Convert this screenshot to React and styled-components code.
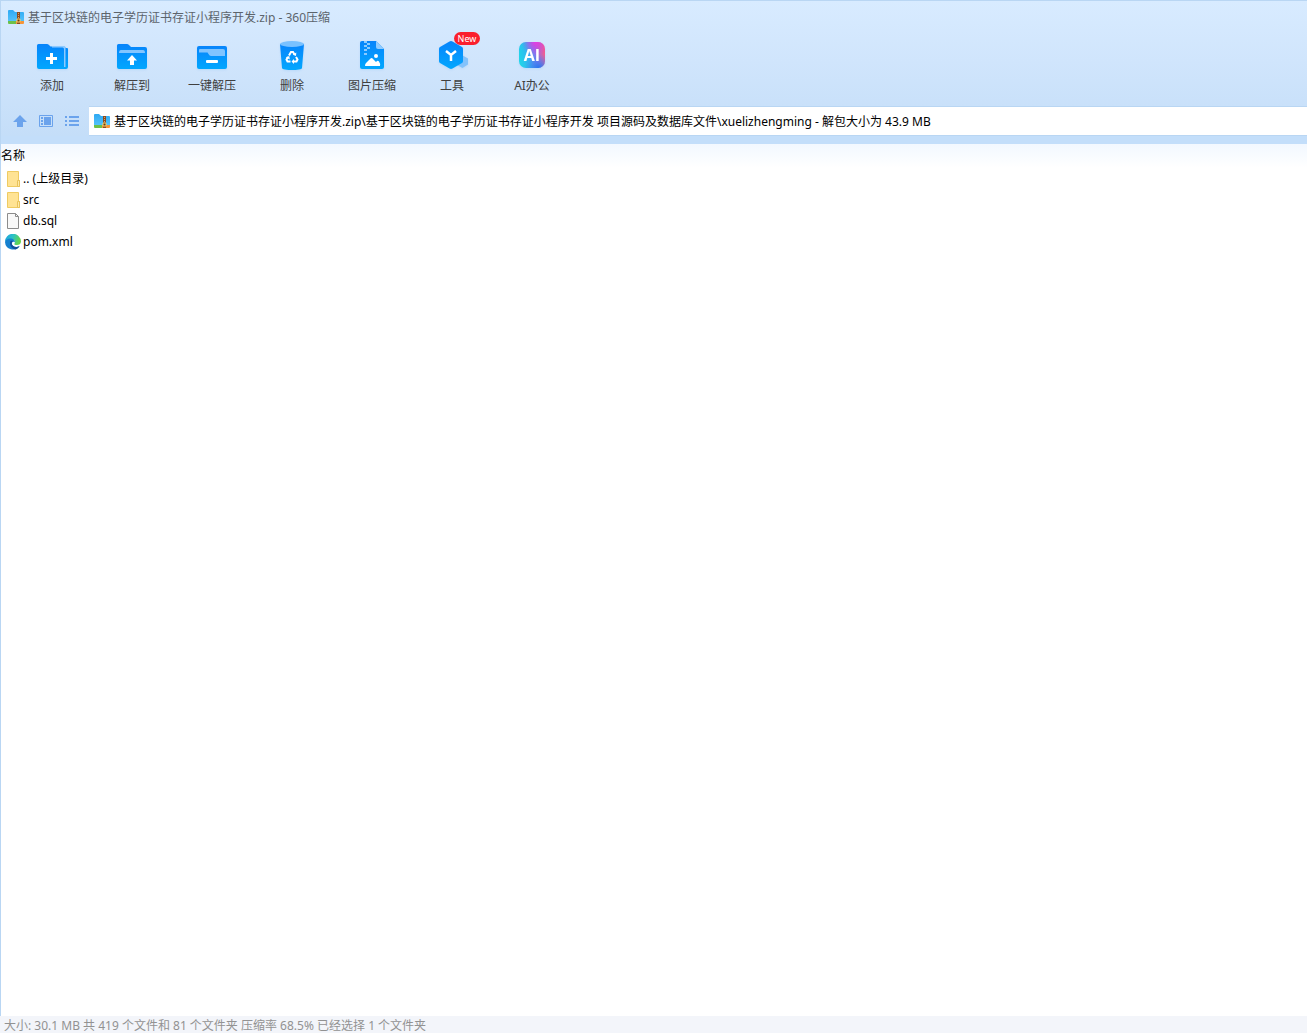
import styled, { createGlobalStyle } from "styled-components";

const title = "基于区块链的电子学历证书存证小程序开发.zip - 360压缩";

const path =
  "基于区块链的电子学历证书存证小程序开发.zip\\基于区块链的电子学历证书存证小程序开发 项目源码及数据库文件\\xuelizhengming - 解包大小为 43.9 MB";

const tools = [
  { label: "添加", Icon: AddIcon },
  { label: "解压到", Icon: ExtractIcon },
  { label: "一键解压", Icon: QuickIcon },
  { label: "删除", Icon: DeleteIcon },
  { label: "图片压缩", Icon: ImageIcon },
  { label: "工具", Icon: ToolsIcon, badge: "New" },
  { label: "AI办公", Icon: AiIcon },
];

const files = [
  { name: ".. (上级目录)", Icon: FolderIcon },
  { name: "src", Icon: FolderIcon },
  { name: "db.sql", Icon: FileIcon },
  { name: "pom.xml", Icon: EdgeIcon },
];

export default function App() {
  return (
    <>
      <GlobalStyle />
      <StyledWindow>
        <StyledHeader>
          <StyledTitleBar>
            <ArchiveIcon />
            <StyledTitle>{title}</StyledTitle>
          </StyledTitleBar>
          <StyledToolbar>
            {tools.map(({ label, Icon, badge }) => (
              <StyledTool type="button" key={label}>
                <Icon />
                {label}
                {badge && <StyledBadge>{badge}</StyledBadge>}
              </StyledTool>
            ))}
          </StyledToolbar>
          <StyledAddressBar>
            <StyledNavButton type="button" aria-label="向上">
              <svg width="14" height="12" viewBox="0 0 14 12">
                <path d="M7 0l7 7h-4v5H4V7H0z" fill="#6ba3ec" />
              </svg>
            </StyledNavButton>
            <StyledNavButton type="button" aria-label="预览">
              <svg width="14" height="12" viewBox="0 0 14 12">
                <path d="M.5.5h13v11H.5z" fill="none" stroke="#6ba3ec" />
                <path
                  d="M5 2h7v8H5zM2 2h2v2H2zM2 5h2v2H2zM2 8h2v2H2z"
                  fill="#6ba3ec"
                />
              </svg>
            </StyledNavButton>
            <StyledNavButton type="button" aria-label="列表">
              <svg width="14" height="10" viewBox="0 0 14 10">
                <path
                  d="M0 0h2v2H0zM0 4h2v2H0zM0 8h2v2H0zM4 0h10v2H4zM4 4h10v2H4zM4 8h10v2H4z"
                  fill="#6ba3ec"
                />
              </svg>
            </StyledNavButton>
            <StyledAddress>
              <ArchiveIcon />
              <StyledInput aria-label="路径" defaultValue={path} />
            </StyledAddress>
          </StyledAddressBar>
        </StyledHeader>
        <StyledMain>
          <StyledTable>
            <thead>
              <tr>
                <StyledHeadCell scope="col">名称</StyledHeadCell>
              </tr>
            </thead>
            <tbody>
              {files.map(({ name, Icon }) => (
                <tr key={name}>
                  <StyledCell>
                    <StyledFile>
                      <Icon />
                      {name}
                    </StyledFile>
                  </StyledCell>
                </tr>
              ))}
            </tbody>
          </StyledTable>
        </StyledMain>
        <StyledStatus>
          大小: 30.1 MB 共 419 个文件和 81 个文件夹 压缩率 68.5% 已经选择 1
          个文件夹
        </StyledStatus>
      </StyledWindow>
    </>
  );
}

function ArchiveIcon() {
  return (
    <svg width="16" height="14" viewBox="0 0 16 14">
      <defs>
        <linearGradient id="archive" x1="0" y1="0" x2="0" y2="1">
          <stop offset="0" stopColor="#2fa9f3" />
          <stop offset="1" stopColor="#55c4fb" />
        </linearGradient>
      </defs>
      <path d="M0 1q0-1 1-1h4l2 2h8q1 0 1 1v9H0z" fill="url(#archive)" />
      <path d="M0 11h9v2q0 1-1 1H1q-1 0-1-1z" fill="#6cc04a" />
      <path d="M8 11h8v2q0 1-1 1H8z" fill="#f5953a" />
      <path d="M9 2h3v12H9z" fill="#8a4b20" />
      <path d="M10 3h1v1h-1zM10 5h1v1h-1zM10 7h1v1h-1z" fill="#d9a066" />
      <path d="M9 9h3v3H9z" fill="#6b3a12" stroke="#f7cf6a" />
    </svg>
  );
}

function BlueFill({ id }) {
  return (
    <defs>
      <linearGradient id={id} x1="0" y1="0" x2="0" y2="1">
        <stop offset="0" stopColor="#0784fb" />
        <stop offset="1" stopColor="#02a7fe" />
      </linearGradient>
    </defs>
  );
}

function AddIcon() {
  return (
    <StyledToolIcon viewBox="0 0 32 32">
      <BlueFill id="add" />
      <path
        d="M2.500 4H11q1 0 2 1l1.500 1.500H28q1.500 0 1.500 1.500H31q1 0 1 1v18q0 2-2 2H3q-2 0-2-2V5.500Q1 4 2.500 4z"
        fill="url(#add)"
      />
      <path d="M16 6h11.500q2 0 2 2v19H28V9q0-1.500-1.500-1.500H16z" fill="#8dcaff" />
      <path d="M14 13h3v4h4v3h-4v4h-3v-4h-4v-3h4z" fill="#fff" />
    </StyledToolIcon>
  );
}

function ExtractIcon() {
  return (
    <StyledToolIcon viewBox="0 0 32 32">
      <BlueFill id="extract" />
      <path
        d="M2.500 4H11q1 0 2 1l2 2h14q2 0 2 2v18q0 2-2 2H3q-2 0-2-2V5.500Q1 4 2.500 4z"
        fill="url(#extract)"
      />
      <path d="M5 10h22q2 0 2 3H3q0-3 2-3z" fill="#83c5ff" />
      <path d="M16 15l5 5.500h-3V25h-4v-4.500h-3z" fill="#fff" />
    </StyledToolIcon>
  );
}

function QuickIcon() {
  return (
    <StyledToolIcon viewBox="0 0 32 32">
      <BlueFill id="quick" />
      <rect x="1" y="6" width="30" height="23" rx="2" fill="url(#quick)" />
      <path
        d="M4 9h23q2 0 2 2v5H15q-1.500 0-2.500-2l-1-1.500H3V10q0-1 1-1z"
        fill="#80c4ff"
      />
      <rect x="10" y="20" width="12" height="3" rx="1" fill="#fff" />
    </StyledToolIcon>
  );
}

function DeleteIcon() {
  return (
    <StyledToolIcon viewBox="0 0 32 32">
      <BlueFill id="delete" />
      <path
        d="M4 4h24l-2 24q0 1-3 1.500-7 1-14 0-3-.5-3-1.500z"
        fill="url(#delete)"
      />
      <ellipse cx="16" cy="4" rx="12" ry="3" fill="#79c1ff" />
      <g fill="none" stroke="#fff" strokeWidth="2">
        <path d="M13 15.500l2-3.500h2l1.500 2.500" />
        <path d="M20 17l1.500 2.500-1 2H17.500" />
        <path d="M14.500 21.500h-3l-1-2L12 17" />
      </g>
      <path
        d="M20.300 12.500l-.3 3.500-3.200-1.300zM18 19v5l-2.500-2.500zM9.800 17.300l3.500-1.300.5 3.500z"
        fill="#fff"
      />
    </StyledToolIcon>
  );
}

function ImageIcon() {
  return (
    <StyledToolIcon viewBox="0 0 32 32">
      <BlueFill id="image" />
      <path
        d="M6 1h14l8 8v18q0 2-2 2H6q-2 0-2-2V3q0-2 2-2z"
        fill="url(#image)"
      />
      <path d="M20 1l8 8h-6q-2 0-2-2z" fill="#91ccff" />
      <path
        d="M8 1h3v2H8zM11 3h3v2h-3zM8 5h3v2H8zM11 7h3v2h-3zM8 9h3v2H8zM8 13h3v2H8z"
        fill="#8bcaff"
      />
      <circle cx="20" cy="16" r="2" fill="#fff" />
      <path
        d="M9 26q0-2 1-3l4.500-4.500q1.500-1 2.500.5l3 3 1-1q1-.7 2 .5 1.500 2 1 4.500z"
        fill="#fff"
      />
    </StyledToolIcon>
  );
}

function ToolsIcon() {
  return (
    <StyledToolIcon viewBox="0 0 32 32">
      <BlueFill id="tools" />
      <path d="M26 15l6 3.500v6L26.500 28 21 25v-6z" fill="#83c2fb" />
      <path
        d="M13.500 1.500q1.500-.8 3 0l9.500 5.500q1 .6 1 2v12q0 1.400-1 2l-9.500 5.500q-1.500.8-3 0L4 23q-1-.6-1-2V9q0-1.400 1-2z"
        fill="url(#tools)"
      />
      <path
        d="M10 11l5 4 5-4M15 15v6"
        fill="none"
        stroke="#fff"
        strokeWidth="2.500"
      />
    </StyledToolIcon>
  );
}

function AiIcon() {
  return (
    <StyledToolIcon viewBox="0 0 32 32">
      <defs>
        <linearGradient id="ai" x1="0" y1="0.600" x2="1" y2="0.400">
          <stop offset="0" stopColor="#20d5e8" />
          <stop offset="0.350" stopColor="#32b5f0" />
          <stop offset="0.650" stopColor="#8775ee" />
          <stop offset="1" stopColor="#fb5a86" />
        </linearGradient>
        <radialGradient id="aiPink" cx="0.650" cy="0" r="0.550">
          <stop offset="0" stopColor="#e93be0" />
          <stop offset="1" stopColor="#b84ae8" stopOpacity="0" />
        </radialGradient>
        <radialGradient id="aiBlue" cx="0.750" cy="1" r="0.550">
          <stop offset="0" stopColor="#2478ef" />
          <stop offset="1" stopColor="#4c80ef" stopOpacity="0" />
        </radialGradient>
      </defs>
      <rect x="3" y="2" width="26" height="26" rx="7" fill="url(#ai)" />
      <rect x="3" y="2" width="26" height="26" rx="7" fill="url(#aiPink)" />
      <rect x="3" y="2" width="26" height="26" rx="7" fill="url(#aiBlue)" />
      <text
        x="16"
        y="21"
        textAnchor="middle"
        fontFamily="Open Sans, sans-serif"
        fontWeight="700"
        fontSize="16"
        fill="#fff"
      >
        AI
      </text>
    </StyledToolIcon>
  );
}

function FolderIcon() {
  return (
    <svg width="16" height="16" viewBox="0 0 16 16">
      <path d="M2.500.5h11v9h1v6h-12z" fill="#ffe394" stroke="#efcb62" />
      <path d="M12.500 9.500h2v6h-2z" fill="#ffe9a8" stroke="#e8c35c" />
    </svg>
  );
}

function FileIcon() {
  return (
    <svg width="16" height="16" viewBox="0 0 16 16">
      <path d="M2.500.5h8l3 3v12h-11z" fill="#f9f9f9" stroke="#8c8c8c" />
      <path d="M10.500.5v3h3" fill="none" stroke="#8c8c8c" />
    </svg>
  );
}

function EdgeIcon() {
  return (
    <svg width="16" height="16" viewBox="0 0 16 16">
      <defs>
        <linearGradient id="edgeTop" x1="0" y1="0" x2="1" y2="0.300">
          <stop offset="0" stopColor="#1b9de2" />
          <stop offset="0.500" stopColor="#2bc1c7" />
          <stop offset="1" stopColor="#62d54e" />
        </linearGradient>
      </defs>
      <path
        d="M0 8a8 8 0 0 1 16-.5c0 2.500-2 3.500-4 3.500-2.500 0-3-1-2.500-1.500C11 8 9.500 5.500 7 5.500 3.500 5.500 1 6 0 8z"
        fill="url(#edgeTop)"
      />
      <path
        d="M0 8c.5-2.500 3.500-4 6.500-3.500 2.500.3 3.800 2.500 3.300 4C9 7 7 7.500 6.800 9.500c0 2.500 2.700 4 5.200 3.500 1-.2 1.800-.6 2.600-1A8 8 0 0 1 0 8z"
        fill="#1580cf"
      />
      <path
        d="M5.500 7C4 10 6 14.500 10.500 15.500c1.700-.6 3.200-1.800 4.100-3.500-3 2-7.600.8-7.800-2.500 0-1 .4-2 1.200-2.400-.8-.6-1.800-.6-2.500-.1z"
        fill="#11509c"
      />
    </svg>
  );
}

const GlobalStyle = createGlobalStyle`
  * {
    box-sizing: border-box;
  }

  body {
    margin: 0;
  }

  body, button, input {
    font-family: "Noto Sans", "Noto Sans CJK SC", sans-serif;
    font-size: 12px;
  }
`;

const StyledWindow = styled.div`
  display: flex;
  flex-direction: column;
  height: 100vh;
  background: #fff;
`;

const StyledHeader = styled.header`
  border-top: 1px solid #b9d6f3;
  border-left: 1px solid #b9d6f3;
  background: linear-gradient(#d8ebff, #d0e5fc 60px, #c3ddf8);
`;

const StyledTitleBar = styled.div`
  display: flex;
  align-items: center;
  gap: 4px;
  height: 31px;
  padding-left: 7px;
`;

const StyledTitle = styled.h1`
  margin: 0;
  font-size: 12px;
  font-weight: 400;
  color: #5c646c;
`;

const StyledToolbar = styled.nav`
  display: flex;
  height: 74px;
  padding: 8px 0 0 11px;
`;

const StyledTool = styled.button`
  position: relative;
  display: flex;
  flex-direction: column;
  align-items: center;
  justify-content: flex-start;
  gap: 4px;
  width: 80px;
  height: 58px;
  padding: 0;
  border: 0;
  background: none;
  line-height: 20px;
  color: #404040;
`;

const StyledToolIcon = styled.svg`
  flex-shrink: 0;
  width: 32px;
  height: 32px;
  filter: drop-shadow(0 1px 1px #8fc3f655);
`;

const StyledBadge = styled.span`
  position: absolute;
  top: -8px;
  left: 42px;
  width: 26px;
  border-radius: 7px;
  background: #fa1f2d;
  font-size: 9px;
  line-height: 13px;
  color: #fff;
`;

const StyledAddressBar = styled.div`
  display: flex;
  align-items: center;
  height: 38px;
  padding: 0 0 8px 6px;
  background: linear-gradient(transparent 30px, #c3defa 30px);
`;

const StyledNavButton = styled.button`
  display: flex;
  align-items: center;
  justify-content: center;
  width: 26px;
  height: 26px;
  padding: 0;
  border: 0;
  background: none;
`;

const StyledAddress = styled.div`
  display: flex;
  flex: 1;
  align-items: center;
  gap: 4px;
  height: 30px;
  margin-left: 4px;
  padding-left: 5px;
  border: 1px solid #b9d6f3;
  border-width: 1px 0;
  background: #fff;
`;

const StyledInput = styled.input`
  flex: 1;
  min-width: 0;
  height: 28px;
  padding: 0;
  border: 0;
  outline: 0;
  background: none;
  color: #000;
`;

const StyledMain = styled.main`
  flex: 1;
  border-left: 1px solid #b9d6f3;
`;

const StyledTable = styled.table`
  width: 100%;
  border-collapse: collapse;
`;

const StyledHeadCell = styled.th`
  height: 24px;
  padding: 0 0 2px;
  background: linear-gradient(#f2f8ff, #fff);
  font-weight: 400;
  text-align: left;
`;

const StyledCell = styled.td`
  height: 21px;
  padding: 0 0 0 4px;
`;

const StyledFile = styled.div`
  display: flex;
  align-items: center;
  gap: 2px;
  line-height: 20px;
`;

const StyledStatus = styled.footer`
  padding: 3px 0 0 4px;
  background: #f3f5fa;
  line-height: 14px;
  color: #929292;
  white-space: nowrap;
`;
